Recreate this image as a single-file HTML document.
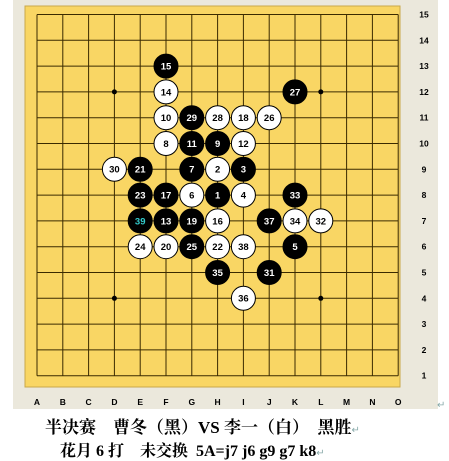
<!DOCTYPE html>
<html><head><meta charset="utf-8">
<style>
html,body{margin:0;padding:0;background:#fff;width:449px;height:458px;overflow:hidden;}
.t{position:absolute;font-family:"Liberation Serif","Noto Serif CJK SC","Noto Sans CJK SC",serif;font-weight:bold;color:#000;white-space:pre;}
.m{font-size:10px;color:#8aa;font-weight:normal;}
</style></head><body>
<svg width="449" height="458" style="position:absolute;left:0;top:0" xmlns="http://www.w3.org/2000/svg">
<rect x="13" y="0" width="425" height="409" fill="#ebe8dc"/>
<rect x="25" y="6" width="375" height="381" fill="#f9d664" stroke="#c9a84a" stroke-width="1"/>
<g stroke="#3a2a00" stroke-width="1">
<line x1="37" y1="14.5" x2="398.2" y2="14.5"/><line x1="37" y1="40.3" x2="398.2" y2="40.3"/><line x1="37" y1="66.1" x2="398.2" y2="66.1"/><line x1="37" y1="91.9" x2="398.2" y2="91.9"/><line x1="37" y1="117.7" x2="398.2" y2="117.7"/><line x1="37" y1="143.5" x2="398.2" y2="143.5"/><line x1="37" y1="169.3" x2="398.2" y2="169.3"/><line x1="37" y1="195.1" x2="398.2" y2="195.1"/><line x1="37" y1="220.9" x2="398.2" y2="220.9"/><line x1="37" y1="246.7" x2="398.2" y2="246.7"/><line x1="37" y1="272.5" x2="398.2" y2="272.5"/><line x1="37" y1="298.3" x2="398.2" y2="298.3"/><line x1="37" y1="324.1" x2="398.2" y2="324.1"/><line x1="37" y1="349.9" x2="398.2" y2="349.9"/><line x1="37" y1="375.7" x2="398.2" y2="375.7"/>
<line y1="14.5" x1="37" y2="375.7" x2="37"/><line y1="14.5" x1="62.8" y2="375.7" x2="62.8"/><line y1="14.5" x1="88.6" y2="375.7" x2="88.6"/><line y1="14.5" x1="114.4" y2="375.7" x2="114.4"/><line y1="14.5" x1="140.2" y2="375.7" x2="140.2"/><line y1="14.5" x1="166" y2="375.7" x2="166"/><line y1="14.5" x1="191.8" y2="375.7" x2="191.8"/><line y1="14.5" x1="217.6" y2="375.7" x2="217.6"/><line y1="14.5" x1="243.4" y2="375.7" x2="243.4"/><line y1="14.5" x1="269.2" y2="375.7" x2="269.2"/><line y1="14.5" x1="295" y2="375.7" x2="295"/><line y1="14.5" x1="320.8" y2="375.7" x2="320.8"/><line y1="14.5" x1="346.6" y2="375.7" x2="346.6"/><line y1="14.5" x1="372.4" y2="375.7" x2="372.4"/><line y1="14.5" x1="398.2" y2="375.7" x2="398.2"/>
</g>
<g fill="#000"><circle cx="114.4" cy="91.9" r="2.5"/><circle cx="320.8" cy="91.9" r="2.5"/><circle cx="114.4" cy="298.3" r="2.5"/><circle cx="320.8" cy="298.3" r="2.5"/><circle cx="217.6" cy="195.1" r="2.5"/></g>
<g font-family="Liberation Sans,sans-serif" font-size="8.5" font-weight="bold" fill="#000" text-anchor="middle">
<text x="37" y="405">A</text><text x="62.8" y="405">B</text><text x="88.6" y="405">C</text><text x="114.4" y="405">D</text><text x="140.2" y="405">E</text><text x="166" y="405">F</text><text x="191.8" y="405">G</text><text x="217.6" y="405">H</text><text x="243.4" y="405">I</text><text x="269.2" y="405">J</text><text x="295" y="405">K</text><text x="320.8" y="405">L</text><text x="346.6" y="405">M</text><text x="372.4" y="405">N</text><text x="398.2" y="405">O</text>
<text x="424" y="17.5">15</text><text x="424" y="43.3">14</text><text x="424" y="69.1">13</text><text x="424" y="94.9">12</text><text x="424" y="120.7">11</text><text x="424" y="146.5">10</text><text x="424" y="172.3">9</text><text x="424" y="198.1">8</text><text x="424" y="223.9">7</text><text x="424" y="249.7">6</text><text x="424" y="275.5">5</text><text x="424" y="301.3">4</text><text x="424" y="327.1">3</text><text x="424" y="352.9">2</text><text x="424" y="378.7">1</text>
</g>
<g stroke="#000" stroke-width="1">
<circle cx="166" cy="66.1" r="12" fill="#000"/>
<circle cx="166" cy="91.9" r="12" fill="#fff"/>
<circle cx="295" cy="91.9" r="12" fill="#000"/>
<circle cx="166" cy="117.7" r="12" fill="#fff"/>
<circle cx="191.8" cy="117.7" r="12" fill="#000"/>
<circle cx="217.6" cy="117.7" r="12" fill="#fff"/>
<circle cx="243.4" cy="117.7" r="12" fill="#fff"/>
<circle cx="269.2" cy="117.7" r="12" fill="#fff"/>
<circle cx="166" cy="143.5" r="12" fill="#fff"/>
<circle cx="191.8" cy="143.5" r="12" fill="#000"/>
<circle cx="217.6" cy="143.5" r="12" fill="#000"/>
<circle cx="243.4" cy="143.5" r="12" fill="#fff"/>
<circle cx="114.4" cy="169.3" r="12" fill="#fff"/>
<circle cx="140.2" cy="169.3" r="12" fill="#000"/>
<circle cx="191.8" cy="169.3" r="12" fill="#000"/>
<circle cx="217.6" cy="169.3" r="12" fill="#fff"/>
<circle cx="243.4" cy="169.3" r="12" fill="#000"/>
<circle cx="140.2" cy="195.1" r="12" fill="#000"/>
<circle cx="166" cy="195.1" r="12" fill="#000"/>
<circle cx="191.8" cy="195.1" r="12" fill="#fff"/>
<circle cx="217.6" cy="195.1" r="12" fill="#000"/>
<circle cx="243.4" cy="195.1" r="12" fill="#fff"/>
<circle cx="295" cy="195.1" r="12" fill="#000"/>
<circle cx="140.2" cy="220.9" r="12" fill="#000"/>
<circle cx="166" cy="220.9" r="12" fill="#000"/>
<circle cx="191.8" cy="220.9" r="12" fill="#000"/>
<circle cx="217.6" cy="220.9" r="12" fill="#fff"/>
<circle cx="269.2" cy="220.9" r="12" fill="#000"/>
<circle cx="295" cy="220.9" r="12" fill="#fff"/>
<circle cx="320.8" cy="220.9" r="12" fill="#fff"/>
<circle cx="140.2" cy="246.7" r="12" fill="#fff"/>
<circle cx="166" cy="246.7" r="12" fill="#fff"/>
<circle cx="191.8" cy="246.7" r="12" fill="#000"/>
<circle cx="217.6" cy="246.7" r="12" fill="#fff"/>
<circle cx="243.4" cy="246.7" r="12" fill="#fff"/>
<circle cx="295" cy="246.7" r="12" fill="#000"/>
<circle cx="217.6" cy="272.5" r="12" fill="#000"/>
<circle cx="269.2" cy="272.5" r="12" fill="#000"/>
<circle cx="243.4" cy="298.3" r="12" fill="#fff"/>
</g>
<g font-family="Liberation Sans,sans-serif" font-size="9.5" font-weight="bold" text-anchor="middle">
<text x="166" y="69.5" fill="#fff">15</text>
<text x="166" y="95.3" fill="#000">14</text>
<text x="295" y="95.3" fill="#fff">27</text>
<text x="166" y="121.1" fill="#000">10</text>
<text x="191.8" y="121.1" fill="#fff">29</text>
<text x="217.6" y="121.1" fill="#000">28</text>
<text x="243.4" y="121.1" fill="#000">18</text>
<text x="269.2" y="121.1" fill="#000">26</text>
<text x="166" y="146.9" fill="#000">8</text>
<text x="191.8" y="146.9" fill="#fff">11</text>
<text x="217.6" y="146.9" fill="#fff">9</text>
<text x="243.4" y="146.9" fill="#000">12</text>
<text x="114.4" y="172.7" fill="#000">30</text>
<text x="140.2" y="172.7" fill="#fff">21</text>
<text x="191.8" y="172.7" fill="#fff">7</text>
<text x="217.6" y="172.7" fill="#000">2</text>
<text x="243.4" y="172.7" fill="#fff">3</text>
<text x="140.2" y="198.5" fill="#fff">23</text>
<text x="166" y="198.5" fill="#fff">17</text>
<text x="191.8" y="198.5" fill="#000">6</text>
<text x="217.6" y="198.5" fill="#fff">1</text>
<text x="243.4" y="198.5" fill="#000">4</text>
<text x="295" y="198.5" fill="#fff">33</text>
<text x="140.2" y="224.3" fill="#3cc">39</text>
<text x="166" y="224.3" fill="#fff">13</text>
<text x="191.8" y="224.3" fill="#fff">19</text>
<text x="217.6" y="224.3" fill="#000">16</text>
<text x="269.2" y="224.3" fill="#fff">37</text>
<text x="295" y="224.3" fill="#000">34</text>
<text x="320.8" y="224.3" fill="#000">32</text>
<text x="140.2" y="250.1" fill="#000">24</text>
<text x="166" y="250.1" fill="#000">20</text>
<text x="191.8" y="250.1" fill="#fff">25</text>
<text x="217.6" y="250.1" fill="#000">22</text>
<text x="243.4" y="250.1" fill="#000">38</text>
<text x="295" y="250.1" fill="#fff">5</text>
<text x="217.6" y="275.9" fill="#fff">35</text>
<text x="269.2" y="275.9" fill="#fff">31</text>
<text x="243.4" y="301.7" fill="#000">36</text>
</g>
</svg>
<div class="t" style="left:45px;top:413px;font-size:17px;">半决赛　曹冬（黑）VS 李一（白）　黑胜<span class="m">↵</span></div>
<div class="t" style="left:60px;top:438px;font-size:16px;">花月 6 打　未交换  5A=j7 j6 g9 g7 k8<span class="m">↵</span></div>
<div class="t m" style="left:437px;top:400px;">↵</div>
</body></html>
